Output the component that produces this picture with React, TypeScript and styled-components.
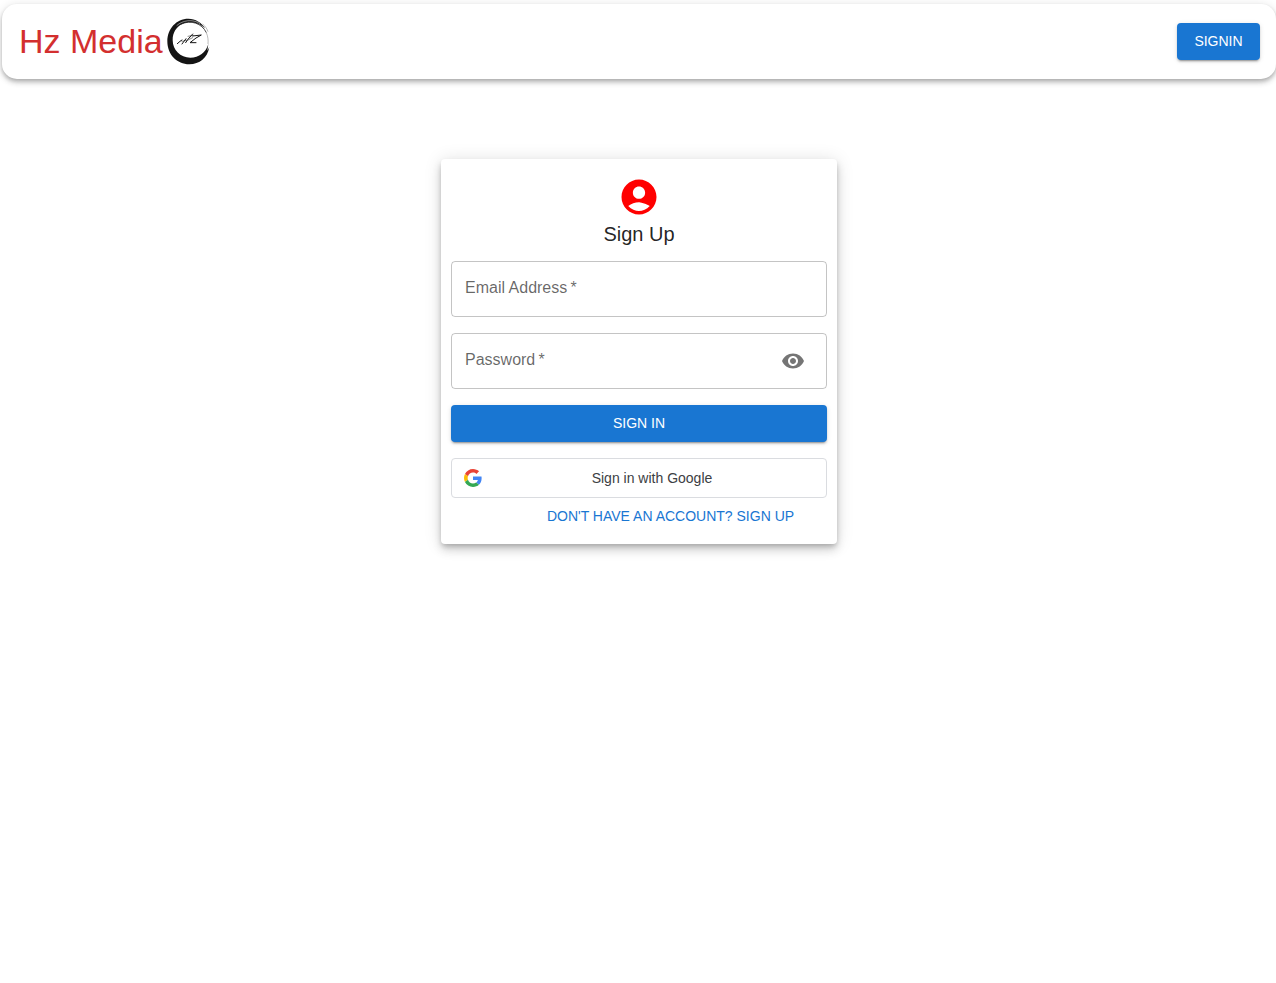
import React, { useState } from "react";
import styled, { createGlobalStyle } from "styled-components";

const GlobalStyle = createGlobalStyle`
  *, *::before, *::after { box-sizing: border-box; }
  body {
    margin: 0;
    background: #fff;
    color: rgba(0, 0, 0, 0.87);
    font-family: "Liberation Sans", Helvetica, Arial, sans-serif;
    font-size: 16px;
    line-height: 24px;
    overflow-x: hidden;
  }
  button, input { font-family: inherit; }
`;

const Page = styled.div`
  padding: 4px 0 24px 2px;
`;

const Header = styled.header`
  display: flex;
  align-items: center;
  justify-content: space-between;
  min-height: 75px;
  padding: 8px 16px;
  border-radius: 15px;
  background: #fff;
  box-shadow:
    0 2px 4px -1px rgba(0, 0, 0, 0.2),
    0 4px 5px 0 rgba(0, 0, 0, 0.14),
    0 1px 10px 0 rgba(0, 0, 0, 0.12);
`;

const Brand = styled.a`
  display: flex;
  align-items: center;
  gap: 3px;
  padding: 0 0 1px 1px;
  color: #d32f2f;
  font-size: 34px;
  line-height: 42px;
  text-decoration: none;
`;

const ContainedButton = styled.button<{ $full?: boolean }>`
  width: ${({ $full }) => ($full ? "100%" : "auto")};
  min-width: 83px;
  height: 37px;
  padding: 0 16px 2px;
  border: 0;
  border-radius: 4px;
  background: #1976d2;
  color: #fff;
  font-size: 14px;
  font-weight: 500;
  line-height: 24px;
  text-transform: uppercase;
  cursor: pointer;
  box-shadow:
    0 3px 1px -2px rgba(0, 0, 0, 0.2),
    0 2px 2px 0 rgba(0, 0, 0, 0.14),
    0 1px 5px 0 rgba(0, 0, 0, 0.12);
  &:hover { background: #1565c0; }
`;

const Main = styled.main`
  width: 100%;
  max-width: 444px;
  margin: 80px auto 0;
  padding: 0 24px;
`;

const Card = styled.section`
  display: flex;
  flex-direction: column;
  align-items: center;
  padding: 17px 10px 9px;
  border-radius: 4px;
  background: #fff;
  box-shadow:
    0 3px 5px -1px rgba(0, 0, 0, 0.2),
    0 6px 10px 0 rgba(0, 0, 0, 0.14),
    0 1px 18px 0 rgba(0, 0, 0, 0.12);
`;

const Title = styled.h1`
  margin: 0 0 11px;
  font-size: 20px;
  font-weight: 400;
  line-height: 32px;
`;

const Form = styled.form`
  display: flex;
  flex-direction: column;
  gap: 16px;
  width: 100%;
`;

const Field = styled.div`
  display: grid;
  grid-template-columns: 1fr auto;
  align-items: center;
  height: 56px;
  padding-right: 13px;
  border: 1px solid rgba(0, 0, 0, 0.23);
  border-radius: 4px;
  &:focus-within { border-color: #1976d2; }
`;

const FieldLabel = styled.label`
  grid-area: 1 / 1;
  padding: 0 0 2px 13px;
  color: rgba(0, 0, 0, 0.6);
  pointer-events: none;
`;

const FieldInput = styled.input`
  grid-area: 1 / 1;
  width: 100%;
  height: 54px;
  padding: 0 13px;
  border: 0;
  outline: 0;
  background: transparent;
  font-size: 16px;
  &:not(:placeholder-shown) + ${FieldLabel} { visibility: hidden; }
`;

const IconButton = styled.button`
  grid-area: 1 / 2;
  display: flex;
  padding: 8px;
  border: 0;
  border-radius: 50%;
  background: transparent;
  color: rgba(0, 0, 0, 0.54);
  cursor: pointer;
`;

const GoogleButton = styled.button`
  display: flex;
  align-items: center;
  gap: 8px;
  height: 40px;
  padding: 0 12px;
  border: 1px solid #dadce0;
  border-radius: 4px;
  background: #fff;
  color: #3c4043;
  font-size: 14px;
  font-weight: 500;
  cursor: pointer;
`;

const GoogleText = styled.span`
  flex: 1;
  text-align: center;
`;

const SwitchRow = styled.div`
  display: flex;
  justify-content: center;
  width: 100%;
  padding-left: 63px;
`;

const TextButton = styled.button`
  height: 37px;
  padding: 0 8px 2px;
  border: 0;
  border-radius: 4px;
  background: transparent;
  color: #1976d2;
  font-size: 14px;
  font-weight: 500;
  line-height: 24px;
  text-transform: uppercase;
  cursor: pointer;
`;

/* Brush-stroke ring around a scribbled monogram. */
const BrandMark = () => (
  <svg width="44" height="48" viewBox="18 15 132 144" aria-hidden="true">
    <path
      fill="#141414"
      d="M136 50C124 31 107 20 85 20C49 20 22 50 22 88C22 128 51 157 88 157C119 157 142 138 148 106L142 116L145 96C138 121 117 137 91 137C61 137 38 114 38 84C38 62 49 45 66 36C90 25 118 32 136 50Z"
    />
    <path d="M50 41C67 25 98 20 120 35" fill="none" stroke="#fff" strokeWidth="1.5" />
    <path d="M62 37C92 22 126 34 139 62" fill="none" stroke="#222" strokeWidth="2.5" />
    <path d="M128 36C136 43 141 50 144 59M139 62C144 74 145 84 144 96" fill="none" stroke="#777" strokeWidth="1.5" />
    <g fill="none" stroke="#151515" strokeLinecap="round" strokeLinejoin="round">
      <path strokeWidth="3" d="M52 95L60 88L66 84M66 96L78 80M77 92L83 83L98 66" />
      <path strokeWidth="1.5" d="M66 88L84 84L98 77M84 73L100 70" />
      <path strokeWidth="3" d="M98 72L124 69L108 78L90 92L108 92" />
    </g>
  </svg>
);

const AccountIcon = () => (
  <svg width="42" height="42" viewBox="0 0 24 24" fill="#f00" aria-hidden="true">
    <path d="M12 2C6.480 2 2 6.480 2 12s4.480 10 10 10 10-4.480 10-10S17.520 2 12 2zm0 4c1.930 0 3.500 1.570 3.500 3.500S13.930 13 12 13s-3.500-1.570-3.500-3.500S10.070 6 12 6zm0 14c-2.030 0-4.430-.82-6.140-2.880C7.550 15.800 9.680 15 12 15q0 .6 0 0s4.450.8 6.140 2.120C16.430 19.180 14.030 20 12 20z" />
  </svg>
);

const EyeIcon = () => (
  <svg width="24" height="24" viewBox="0 0 24 24" fill="currentColor" aria-hidden="true">
    <path d="M12 4.500C7 4.500 2.730 7.610 1 12c1.730 4.390 6 7.500 11 7.500s9.270-3.110 11-7.500c-1.730-4.390-6-7.500-11-7.500zM12 17c-2.760 0-5-2.240-5-5s2.240-5 5-5 5 2.240 5 5-2.240 5-5 5zm0-8c-1.660 0-3 1.340-3 3s1.340 3 3 3 3-1.340 3-3-1.340-3-3-3z" />
  </svg>
);

const GoogleIcon = () => (
  <svg width="18" height="18" viewBox="0 0 48 48" aria-hidden="true">
    <path fill="#EA4335" d="M24 9.500c3.540 0 6.710 1.220 9.210 3.600l6.850-6.850C35.900 2.380 30.470 0 24 0 14.620 0 6.510 5.380 2.560 13.220l7.980 6.190C12.430 13.720 17.740 9.500 24 9.500z" />
    <path fill="#4285F4" d="M46.980 24.550c0-1.570-.15-3.090-.38-4.550H24v9.020h12.940c-.58 2.960-2.260 5.480-4.780 7.180l7.730 6c4.510-4.180 7.090-10.360 7.090-17.650z" />
    <path fill="#FBBC05" d="M10.530 28.590c-.48-1.450-.76-2.990-.76-4.590s.27-3.140.76-4.590l-7.980-6.190C.92 16.460 0 20.120 0 24c0 3.880.92 7.540 2.560 10.780l7.970-6.190z" />
    <path fill="#34A853" d="M24 48c6.480 0 11.930-2.130 15.890-5.810l-7.730-6c-2.150 1.450-4.920 2.300-8.160 2.300-6.260 0-11.570-4.220-13.470-9.910l-7.980 6.190C6.510 42.620 14.620 48 24 48z" />
  </svg>
);

export default function App() {
  const [showPassword, setShowPassword] = useState(false);

  return (
    <>
      <GlobalStyle />
      <Page>
        <Header>
          <Brand href="#">
            Hz Media
            <BrandMark />
          </Brand>
          <ContainedButton type="button">Signin</ContainedButton>
        </Header>
        <Main>
          <Card>
            <AccountIcon />
            <Title>Sign Up</Title>
            <Form onSubmit={(event) => event.preventDefault()}>
              <Field>
                <FieldInput id="email" type="email" placeholder=" " required />
                <FieldLabel htmlFor="email">Email Address{"\u2009"}*</FieldLabel>
              </Field>
              <Field>
                <FieldInput id="password" type={showPassword ? "text" : "password"} placeholder=" " required />
                <FieldLabel htmlFor="password">Password{"\u2009"}*</FieldLabel>
                <IconButton
                  type="button"
                  aria-label="Toggle password visibility"
                  onClick={() => setShowPassword(!showPassword)}
                >
                  <EyeIcon />
                </IconButton>
              </Field>
              <ContainedButton type="submit" $full>Sign in</ContainedButton>
              <GoogleButton type="button">
                <GoogleIcon />
                <GoogleText>Sign in with Google</GoogleText>
              </GoogleButton>
            </Form>
            <SwitchRow>
              <TextButton type="button">Don't have an account? Sign up</TextButton>
            </SwitchRow>
          </Card>
        </Main>
      </Page>
    </>
  );
}
